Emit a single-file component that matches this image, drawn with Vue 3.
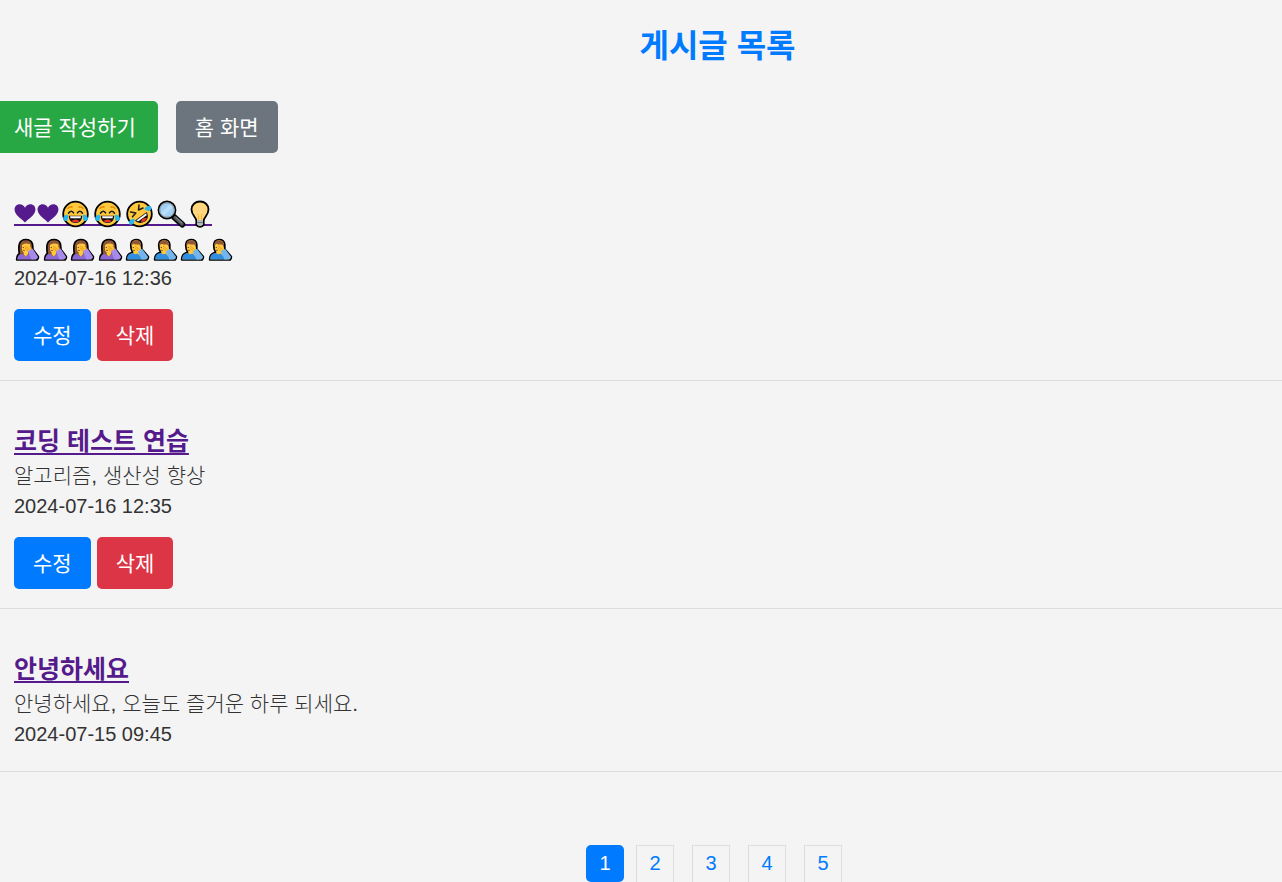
<template>
  <div class="page">
    <!-- 이모지 -->
    <svg class="sprite" aria-hidden="true">
      <symbol id="heart" viewBox="0 0 23 28">
        <path d="M11 22.5C8 19 1 15.5 .6 10C.3 6.500 2.700 4.200 5.600 4.200C8 4.200 10 5.400 11 7.700C12 5.400 14 4.200 16.400 4.200C19.400 4.200 21.700 6.500 21.400 10C21 15.500 14 19 11 22.500Z" fill="#551a8b" />
      </symbol>
      <symbol id="joy" viewBox="0 0 32 28">
        <circle cx="15.500" cy="14" r="12.300" fill="#ffc83d" stroke="#000" stroke-width="1.800" />
        <path d="M8 8.300Q9.500 6.500 12 7M19 7Q21.500 6.500 23 8.300" fill="none" stroke="#d67d00" stroke-width="1.300" stroke-linecap="round" />
        <path d="M8.500 13.200Q11 9.500 13.500 12.800M17.500 12.800Q20 9.500 22.500 13.200" fill="none" stroke="#1d1d1d" stroke-width="1.600" stroke-linecap="round" />
        <path d="M8.700 15.700H22.300C22 20.500 19.300 23 15.500 23S9 20.500 8.700 15.700Z" fill="#111" />
        <path d="M10 16.200H21L20.500 18.200H10.500Z" fill="#fff" />
        <path d="M11.500 21Q15.500 17.800 19.500 21Q15.500 24 11.500 21Z" fill="#e6352b" />
        <path d="M8 14.700C5 14.700 3 16.500 3 18.700A2.600 2.600 0 0 0 8 19.300ZM23 14.700C26 14.700 28 16.500 28 18.700A2.600 2.600 0 0 1 23 19.300Z" fill="#26b9f2" />
      </symbol>
      <symbol id="rofl" viewBox="0 0 32 28">
        <circle cx="15.500" cy="14" r="12.300" fill="#ffc83d" stroke="#000" stroke-width="1.800" />
        <path d="M6.500 12L11.800 13L8.500 16.800M15 5L14.500 10L19 8" fill="none" stroke="#1d1d1d" stroke-width="1.500" stroke-linecap="round" stroke-linejoin="round" />
        <path d="M11 20.500L22.800 12C25 16.500 23.500 20 20.500 21.800C17 23.800 13 23 11 20.500Z" fill="#111" />
        <path d="M12.300 20.500L22.300 13.300L22.700 15.300L14.300 21.300Z" fill="#fff" />
        <path d="M17 22C17.500 18.500 20 17.300 22.800 18.200C22 20.800 19.500 22.300 17 22Z" fill="#e6352b" />
        <path d="M20.500 9.300C21.500 5.800 25.500 5.500 27.300 6.800C28.300 10.500 24.500 12.500 20.500 9.300ZM10.500 18.800C11.300 22.500 8.800 25.300 5.600 24.500C3.700 21.500 6.500 18.800 10.500 18.800Z" fill="#26b9f2" />
      </symbol>
      <symbol id="search" viewBox="0 0 32 28">
        <path d="M18 17L26.300 24.500" stroke="#000" stroke-width="6" stroke-linecap="round" />
        <path d="M19 17.700L26 24" stroke="#4b5356" stroke-width="3.500" stroke-linecap="round" />
        <path d="M20 17.500L26 23" stroke="#78858a" stroke-width="1.200" stroke-linecap="round" />
        <circle cx="11" cy="10" r="8.500" fill="#9ed0f8" stroke="#000" stroke-width="1.800" />
        <path d="M5 13L14 4.200L17 7.200L8 16Z" fill="#b9defa" />
        <circle cx="11" cy="10" r="7.200" fill="none" stroke="#91a1a8" stroke-width="1.200" />
      </symbol>
      <symbol id="bulb" viewBox="0 0 24 28">
        <path d="M8.300 25V20.500C8 17 3.500 15 3.500 9.500C3.500 4.800 7.200 1.500 12 1.500S20.500 4.800 20.500 9.500C20.500 15 16 17 15.700 20.500V25Q12 28.500 8.300 25Z" fill="#ffd67d" stroke="#000" stroke-width="1.800" />
        <path d="M9.300 19.800H14.700V25Q12 27 9.300 25Z" fill="#b4bcc1" />
        <path d="M9.300 22.500H14.700" stroke="#697277" />
        <path d="M9.500 14L10.500 15.500V19.500M14.500 14L13.500 15.500V19.500" fill="none" stroke="#ffae22" stroke-width="1" />
      </symbol>
      <symbol id="woman" viewBox="0 0 27 26">
        <path d="M2.700 23C2.500 19.500 3.500 17.700 5.300 16.500C4.700 12.500 4.700 9 5.500 6.500C6.500 3.700 9 2.500 12 2.500S17.300 3.700 18.300 6.500C18.800 8.500 18.800 10.500 19 12.500L24.300 19.500Q24.700 21.500 23 23Z" fill="#8d5738" stroke="#000" stroke-width="1.700" stroke-linejoin="round" />
        <path d="M8 8Q12 5.500 16.300 7.500V12C16 14.500 14.500 16 12 16S8 14.500 8 12Z" fill="#ffc83d" />
        <path d="M3.300 22.400C3.200 19 5 17.300 8.500 17L11.500 20L14.500 17L20 22.400Z" fill="#8b68d9" />
        <path d="M9.800 15H14V17L11.600 19.700L9.600 17Z" fill="#ffc83d" />
        <path d="M10.500 9L12 8.500L16.500 10L18 12.500L14.800 15.500L11.500 13Z" fill="#ffbf32" />
        <path d="M11 9L15.500 12.500M11 11L14.500 14" stroke="#d99120" stroke-width=".7" />
        <path d="M13.800 14.500L18.500 11.500L23.800 19.500Q24.200 21.500 22 22.400H17.500Z" fill="#a78bec" />
        <path d="M8.700 10.500H10M9 13.500Q10 12.800 10.800 13.500" fill="none" stroke="#59351f" stroke-width=".8" />
      </symbol>
      <symbol id="man" viewBox="0 0 27 26">
        <path d="M6.700 8C6.700 4.500 9 2.500 12 2.500S17.500 4.300 17.800 7.500V12L24.300 19.500Q24.700 21.500 23 23H2.700C2.300 18.500 4 16.500 8.500 15.300C7.200 13.500 6.700 11 6.700 8Z" fill="#ffc83d" stroke="#000" stroke-width="1.700" stroke-linejoin="round" />
        <path d="M7.500 8.300C7.300 5 9.300 3.300 12 3.300S17 5 17 8.300V10.500L15.300 7.500Q11.500 7.800 9.800 6.700Z" fill="#8d5738" />
        <path d="M3.300 22.400C3 18.500 5 16.500 9 16.100Q11 18 13.500 16.500L20 22.400Z" fill="#318ddf" />
        <path d="M11 9L15.500 12.500M11 11L14.500 14" stroke="#d99120" stroke-width=".7" />
        <path d="M13.800 14.500L18 11.800L23.800 19.500Q24.200 21.500 22 22.400H17.500Z" fill="#72b5ef" />
        <path d="M8.700 10.500H10M9 13.500Q10 12.800 10.800 13.500" fill="none" stroke="#59351f" stroke-width=".8" />
      </symbol>
    </svg>

    <h1>게시글 목록</h1>

    <div class="toolbar">
      <button type="button" class="btn btn-new">새글 작성하기</button>
      <button type="button" class="btn btn-home">홈 화면</button>
    </div>

    <!-- 게시글 -->
    <ul class="posts">
      <li v-for="post in posts" :key="post.id" class="post">
        <h2>
          <a v-if="post.titleIcons" href="#" class="icon-link" aria-label="하트와 웃는 얼굴">
            <svg v-for="(icon, i) in post.titleIcons" :key="i" :class="['emoji', 'emoji--' + icon]"><use :href="'#' + icon" /></svg>
          </a>
          <a v-else href="#">{{ post.title }}</a>
        </h2>
        <div v-if="post.contentIcons" class="content icon-row">
          <svg v-for="(icon, i) in post.contentIcons" :key="i" class="person"><use :href="'#' + icon" /></svg>
        </div>
        <div v-else class="content">{{ post.content }}</div>
        <div class="date">{{ post.date }}</div>
        <div v-if="post.mine" class="actions">
          <button type="button" class="btn btn-edit">수정</button>
          <button type="button" class="btn btn-delete">삭제</button>
        </div>
      </li>
    </ul>

    <!-- 페이지 번호 -->
    <nav class="pagination" aria-label="페이지">
      <a
        v-for="n in 5"
        :key="n"
        href="#"
        :class="['page-link', currentPage === n && 'page-link--active']"
        @click.prevent="currentPage = n"
      >{{ n }}</a>
    </nav>
  </div>
</template>

<script setup>
import { ref } from 'vue'

const currentPage = ref(1)

const posts = ref([
  {
    id: 3,
    titleIcons: ['heart', 'heart', 'joy', 'joy', 'rofl', 'search', 'bulb'],
    contentIcons: ['woman', 'woman', 'woman', 'woman', 'man', 'man', 'man', 'man'],
    date: '2024-07-16 12:36',
    mine: true
  },
  { id: 2, title: '코딩 테스트 연습', content: '알고리즘, 생산성 향상', date: '2024-07-16 12:35', mine: true },
  { id: 1, title: '안녕하세요', content: '안녕하세요, 오늘도 즐거운 하루 되세요.', date: '2024-07-15 09:45', mine: false }
])
</script>

<style>
body { margin: 0; background: #f4f4f4; }
</style>

<style scoped>
.page { display: flow-root; color: #333; font-family: "Liberation Sans", "Noto Sans CJK KR", sans-serif; font-size: 20px; line-height: 30px; }
.sprite { display: none; }

h1 { margin: 22px 0 31px; padding-left: 153px; text-align: center; color: #007bff; font-size: 32px; line-height: 48px; font-weight: 700; }

.toolbar { display: flex; gap: 18px; }
.btn { height: 52px; padding: 2px 19px 0; border: none; border-radius: 5px; color: #fff; font-family: inherit; font-size: 21px; line-height: 30px; cursor: pointer; }
.btn-new { padding-right: 22px; padding-left: 14px; border-radius: 0 5px 5px 0; background: #28a745; }
.btn-home { background: #6c757d; }
.btn-edit { background: #007bff; }
.btn-delete { background: #dc3545; }

.posts { margin: 0; padding: 0; list-style: none; }
.post { padding: 42px 14px 19px; border-bottom: 1px solid #ddd; }
.post h2 { margin: 0 0 2px; height: 36px; font-size: 25px; line-height: 36px; font-weight: 700; }
.post h2 a { color: #551a8b; text-decoration-thickness: 2px; text-underline-offset: 3px; text-decoration-skip-ink: none; }
.post h2 .icon-link { display: inline-flex; height: 28px; margin-top: 5px; background: linear-gradient(#551a8b, #551a8b) 0 24px / 100% 2px no-repeat; }
.emoji { width: 32px; height: 28px; }
.emoji--heart { width: 23px; }
.emoji--bulb { width: 24px; }

.content { height: 30px; font-size: 21px; font-weight: 300; }
.icon-row { display: grid; grid-template-columns: repeat(8, 1fr); align-items: end; width: 220px; }
.person { width: 27px; height: 26px; }
.date { margin-bottom: 3px; }
.actions { display: flex; gap: 6px; padding-top: 13px; }

.pagination { display: flex; justify-content: center; padding: 73px 0 0 146px; }
.page-link { box-sizing: border-box; width: 38px; height: 37px; margin-right: 18px; border: 1px solid #ddd; border-bottom: none; color: #007bff; text-align: center; text-decoration: none; line-height: 34px; }
.page-link:last-child { margin-right: 0; }
.page-link--active { margin-right: 12px; border: none; border-radius: 5px; background: #007bff; color: #fff; line-height: 36px; }
</style>
